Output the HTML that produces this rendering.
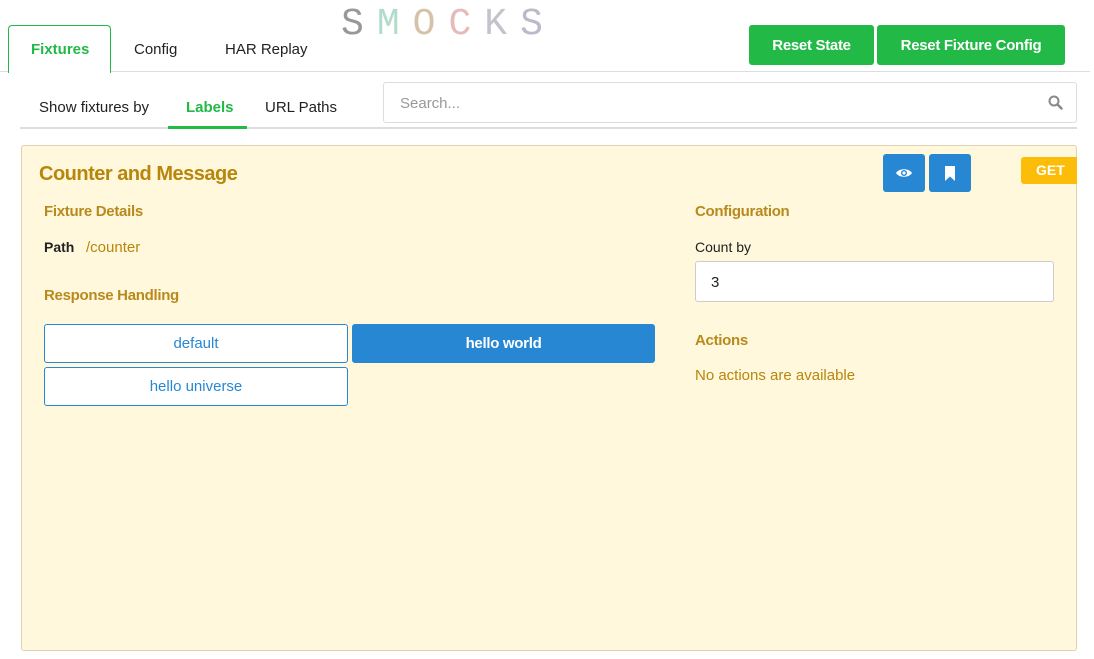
<!DOCTYPE html>
<html><head><meta charset="utf-8"><style>
*{box-sizing:border-box;margin:0;padding:0}
body{width:1094px;height:659px;background:#fff;font-family:"Liberation Sans",sans-serif;position:relative;overflow:hidden;font-size:14px;color:#222}
.a{position:absolute}
.tab{position:absolute;top:26px;height:47px;line-height:48px;font-size:15px;color:#222}
.btn{position:absolute;top:25px;height:40px;background:#22b947;color:#fff;font-weight:bold;font-size:15px;text-align:center;line-height:41px;border-radius:3px;letter-spacing:-0.3px}
.h{font-weight:bold;font-size:15px;color:#b88a1e;letter-spacing:-0.3px}
.ob{position:absolute;border:1px solid #2787d3;border-radius:3px;color:#2787d3;text-align:center;font-size:15px;height:39px;line-height:38px;background:#fff}
</style></head><body>
<div class="a" style="left:8px;top:25px;width:103px;height:48px;border:1px solid #22b947;border-bottom:none;border-radius:4px 4px 0 0;background:#fff;z-index:2"></div>
<div class="tab" style="left:31px;color:#22b947;font-weight:bold;z-index:3">Fixtures</div>
<div class="tab" style="left:134px">Config</div>
<div class="tab" style="left:225px">HAR Replay</div>
<div class="a" style="left:0;top:71px;width:1090px;height:1px;background:#ddd"></div>
<div class="a" style="left:341px;top:6px;font-family:'Liberation Mono',monospace;font-size:38px;letter-spacing:13px;line-height:38px;opacity:.5"><span style="color:#333">S</span><span style="color:#6b9">M</span><span style="color:#a85">O</span><span style="color:#c77">C</span><span style="color:#889">K</span><span style="color:#779">S</span></div>
<div class="btn" style="left:749px;width:125px">Reset State</div>
<div class="btn" style="left:877px;width:188px">Reset Fixture Config</div>

<div class="a" style="left:39px;top:99px;font-size:15px">Show fixtures by</div>
<div class="a" style="left:186px;top:99px;font-size:15px;color:#22b947;font-weight:bold">Labels</div>
<div class="a" style="left:265px;top:99px;font-size:15px">URL Paths</div>
<div class="a" style="left:20px;top:127px;width:1057px;height:2px;background:#ddd"></div>
<div class="a" style="left:168px;top:126px;width:79px;height:3px;background:#22b947"></div>
<div class="a" style="left:383px;top:82px;width:694px;height:41px;border:1px solid #ddd;border-radius:3px;background:#fff"></div>
<div class="a" style="left:400px;top:95px;font-size:15px;color:#999">Search...</div>
<svg class="a" style="left:1048px;top:95px" width="15" height="15" viewBox="0 0 15 15"><circle cx="6" cy="6" r="4.5" fill="none" stroke="#888" stroke-width="2"/><path d="M9.5 9.5L13.5 13.5" stroke="#888" stroke-width="2.4" stroke-linecap="round"/></svg>

<div class="a" style="left:21px;top:145px;width:1056px;height:506px;background:#fff8dc;border:1px solid #ddd3b0;border-radius:3px"></div>
<div class="a" style="left:39px;top:163px;font-size:20px;font-weight:bold;color:#b8860b;letter-spacing:-0.5px">Counter and Message</div>
<div class="a" style="left:883px;top:154px;width:42px;height:38px;background:#2787d3;border-radius:3px"></div>
<svg class="a" style="left:895px;top:166px" width="18" height="14" viewBox="0 0 18 14"><path d="M1 7C4 2 14 2 17 7C14 12 4 12 1 7Z" fill="#fff"/><circle cx="9" cy="7" r="3" fill="#2787d3"/><circle cx="9" cy="7" r="1.6" fill="#fff"/></svg>
<div class="a" style="left:929px;top:154px;width:42px;height:38px;background:#2787d3;border-radius:3px"></div>
<svg class="a" style="left:944px;top:166px" width="12" height="15" viewBox="0 0 12 15"><path d="M1 0H11V15L6 10.5L1 15Z" fill="#fff"/></svg>
<div class="a" style="left:1021px;top:157px;width:56px;height:27px;background:#fbbd08;border-radius:3px 0 0 3px;color:#fff;font-weight:bold;font-size:14px;line-height:27px;padding-left:15px">GET</div>

<div class="a h" style="left:44px;top:203px">Fixture Details</div>
<div class="a" style="left:44px;top:239px;font-size:14px;font-weight:bold;color:#222">Path</div>
<div class="a" style="left:86px;top:239px;font-size:15px;color:#b8860b">/counter</div>
<div class="a h" style="left:44px;top:287px">Response Handling</div>
<div class="ob" style="left:44px;top:324px;width:304px">default</div>
<div class="ob" style="left:352px;top:324px;width:303px;background:#2787d3;color:#fff;font-weight:bold;letter-spacing:-0.3px">hello world</div>
<div class="ob" style="left:44px;top:367px;width:304px">hello universe</div>

<div class="a h" style="left:695px;top:203px">Configuration</div>
<div class="a" style="left:695px;top:239px;font-size:14px;color:#222">Count by</div>
<div class="a" style="left:695px;top:261px;width:359px;height:41px;border:1px solid #ccc;border-radius:3px;background:#fff;padding-left:15px;line-height:41px;font-size:15px">3</div>
<div class="a h" style="left:695px;top:332px">Actions</div>
<div class="a" style="left:695px;top:367px;font-size:15px;color:#b8860b">No actions are available</div>
</body></html>
